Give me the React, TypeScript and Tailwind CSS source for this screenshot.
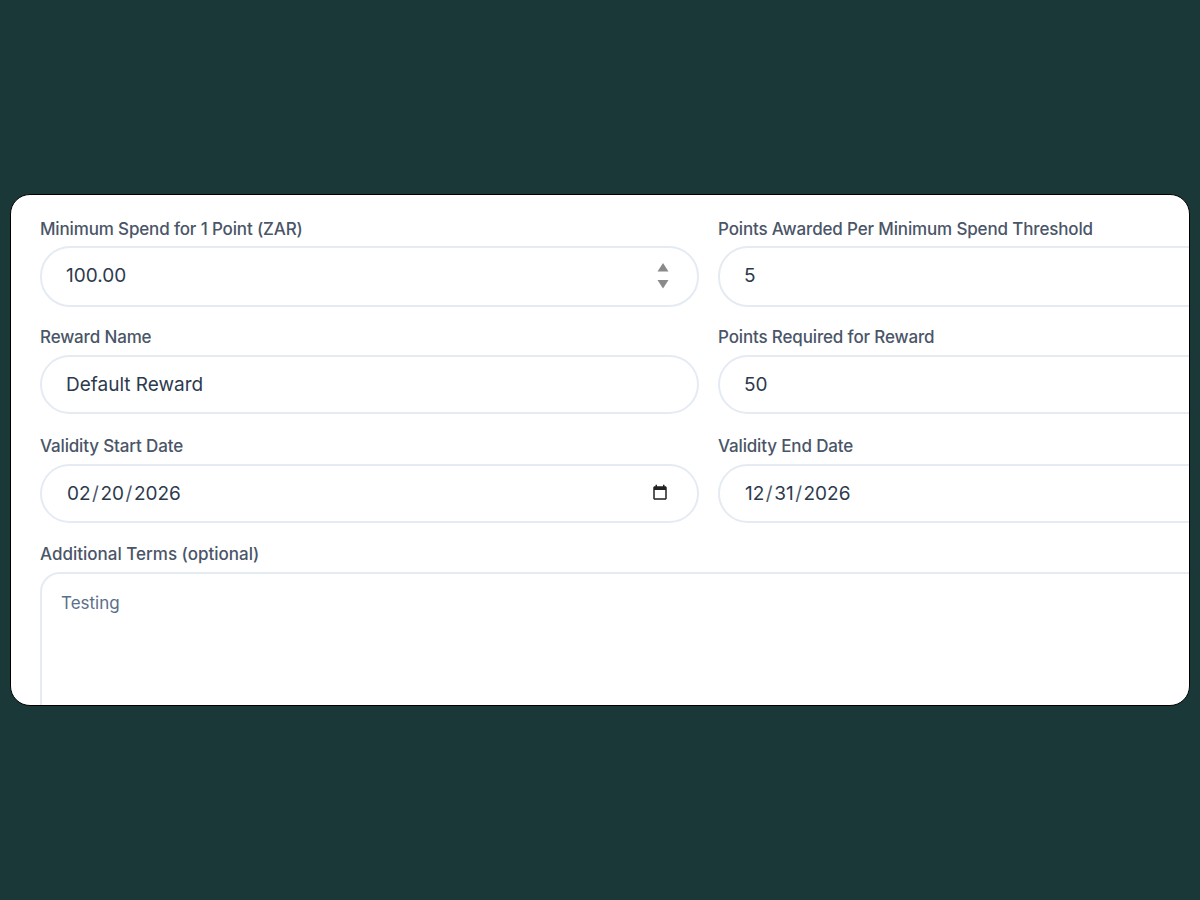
const labelClass = "block text-[17px] leading-[20px] font-medium text-[#4a5568] tracking-[-0.15px]";
const inputClass = "w-full h-[59px] flex items-center justify-between rounded-[30px] border-2 border-[#e5ebf2] bg-white pl-[24px] pr-[26px] text-[19px] text-[#2d3a4e]";

const Field: React.FC<{ label: string; gap: string; children: React.ReactNode }> = ({ label, gap, children }) => (
  <div className="w-[659px] shrink-0">
    <label className={labelClass + " " + gap}>{label}</label>
    {children}
  </div>
);

const Spinner = () => (
  <svg width="12" height="26" viewBox="0 0 12 26" className="shrink-0 mr-[2px] mb-[2px]">
    <path d="M6 0 L11.5 8.5 L0.5 8.5 Z" fill="#8a8a8a" />
    <path d="M0.5 17 L11.5 17 L6 25.5 Z" fill="#8a8a8a" />
  </svg>
);

const CalendarIcon = () => (
  <svg width="18" height="18" viewBox="0 0 24 24" className="shrink-0 mr-[2px] mb-[3px]">
    <path
      d="M19 3h-1V1h-2v2H8V1H6v2H5c-1.1 0-2 .9-2 2v14c0 1.100.9 2 2 2h14c1.100 0 2-.9 2-2V5c0-1.100-.9-2-2-2zm0 16H5V8h14v11z"
      fill="#222"
    />
  </svg>
);

const DateValue: React.FC<{ parts: string[] }> = ({ parts }) => (
  <span className="flex items-center pl-[1px]">
    {parts[0]}
    <span className="px-[1.5px] text-[#4a5568]">/</span>
    {parts[1]}
    <span className="px-[1.5px] text-[#4a5568]">/</span>
    {parts[2]}
  </span>
);

export default function App() {
  return (
    <div
      className="w-[1200px] h-[900px] bg-[#1a3838] flex flex-col justify-center px-[10px]"
      style={{ fontFamily: "Inter, 'Noto Sans', sans-serif" }}
    >
      <div className="h-[512px] rounded-[20px] border border-black bg-white overflow-hidden pl-[29px] pt-[24px]">
        <div className="flex gap-[19px] mb-[20px]">
          <Field label="Minimum Spend for 1 Point (ZAR)" gap="mb-[7px]">
            <div className={inputClass + " h-[61px]"}>
              <span>100.00</span>
              <Spinner />
            </div>
          </Field>
          <Field label="Points Awarded Per Minimum Spend Threshold" gap="mb-[7px]">
            <div className={inputClass + " h-[61px]"}>
              <span>5</span>
            </div>
          </Field>
        </div>
        <div className="flex gap-[19px] mb-[22px]">
          <Field label="Reward Name" gap="mb-[8px]">
            <div className={inputClass + " pt-[2px]"}>
              <span>Default Reward</span>
            </div>
          </Field>
          <Field label="Points Required for Reward" gap="mb-[8px]">
            <div className={inputClass + " pt-[2px]"}>
              <span>50</span>
            </div>
          </Field>
        </div>
        <div className="flex gap-[19px] mb-[21px]">
          <Field label="Validity Start Date" gap="mb-[8px]">
            <div className={inputClass + " pt-[2px]"}>
              <DateValue parts={["02", "20", "2026"]} />
              <CalendarIcon />
            </div>
          </Field>
          <Field label="Validity End Date" gap="mb-[8px]">
            <div className={inputClass + " pt-[2px]"}>
              <DateValue parts={["12", "31", "2026"]} />
            </div>
          </Field>
        </div>
        <label className={labelClass + " mb-[8px] tracking-[0px]"}>Additional Terms (optional)</label>
        <div className="w-[1336px] h-[200px] rounded-[20px] border-2 border-[#e5ebf2] pl-[19px] pt-[17px] text-[17px] leading-[24px] text-[#5b6f8a]">
          Testing
        </div>
      </div>
    </div>
  );
}
